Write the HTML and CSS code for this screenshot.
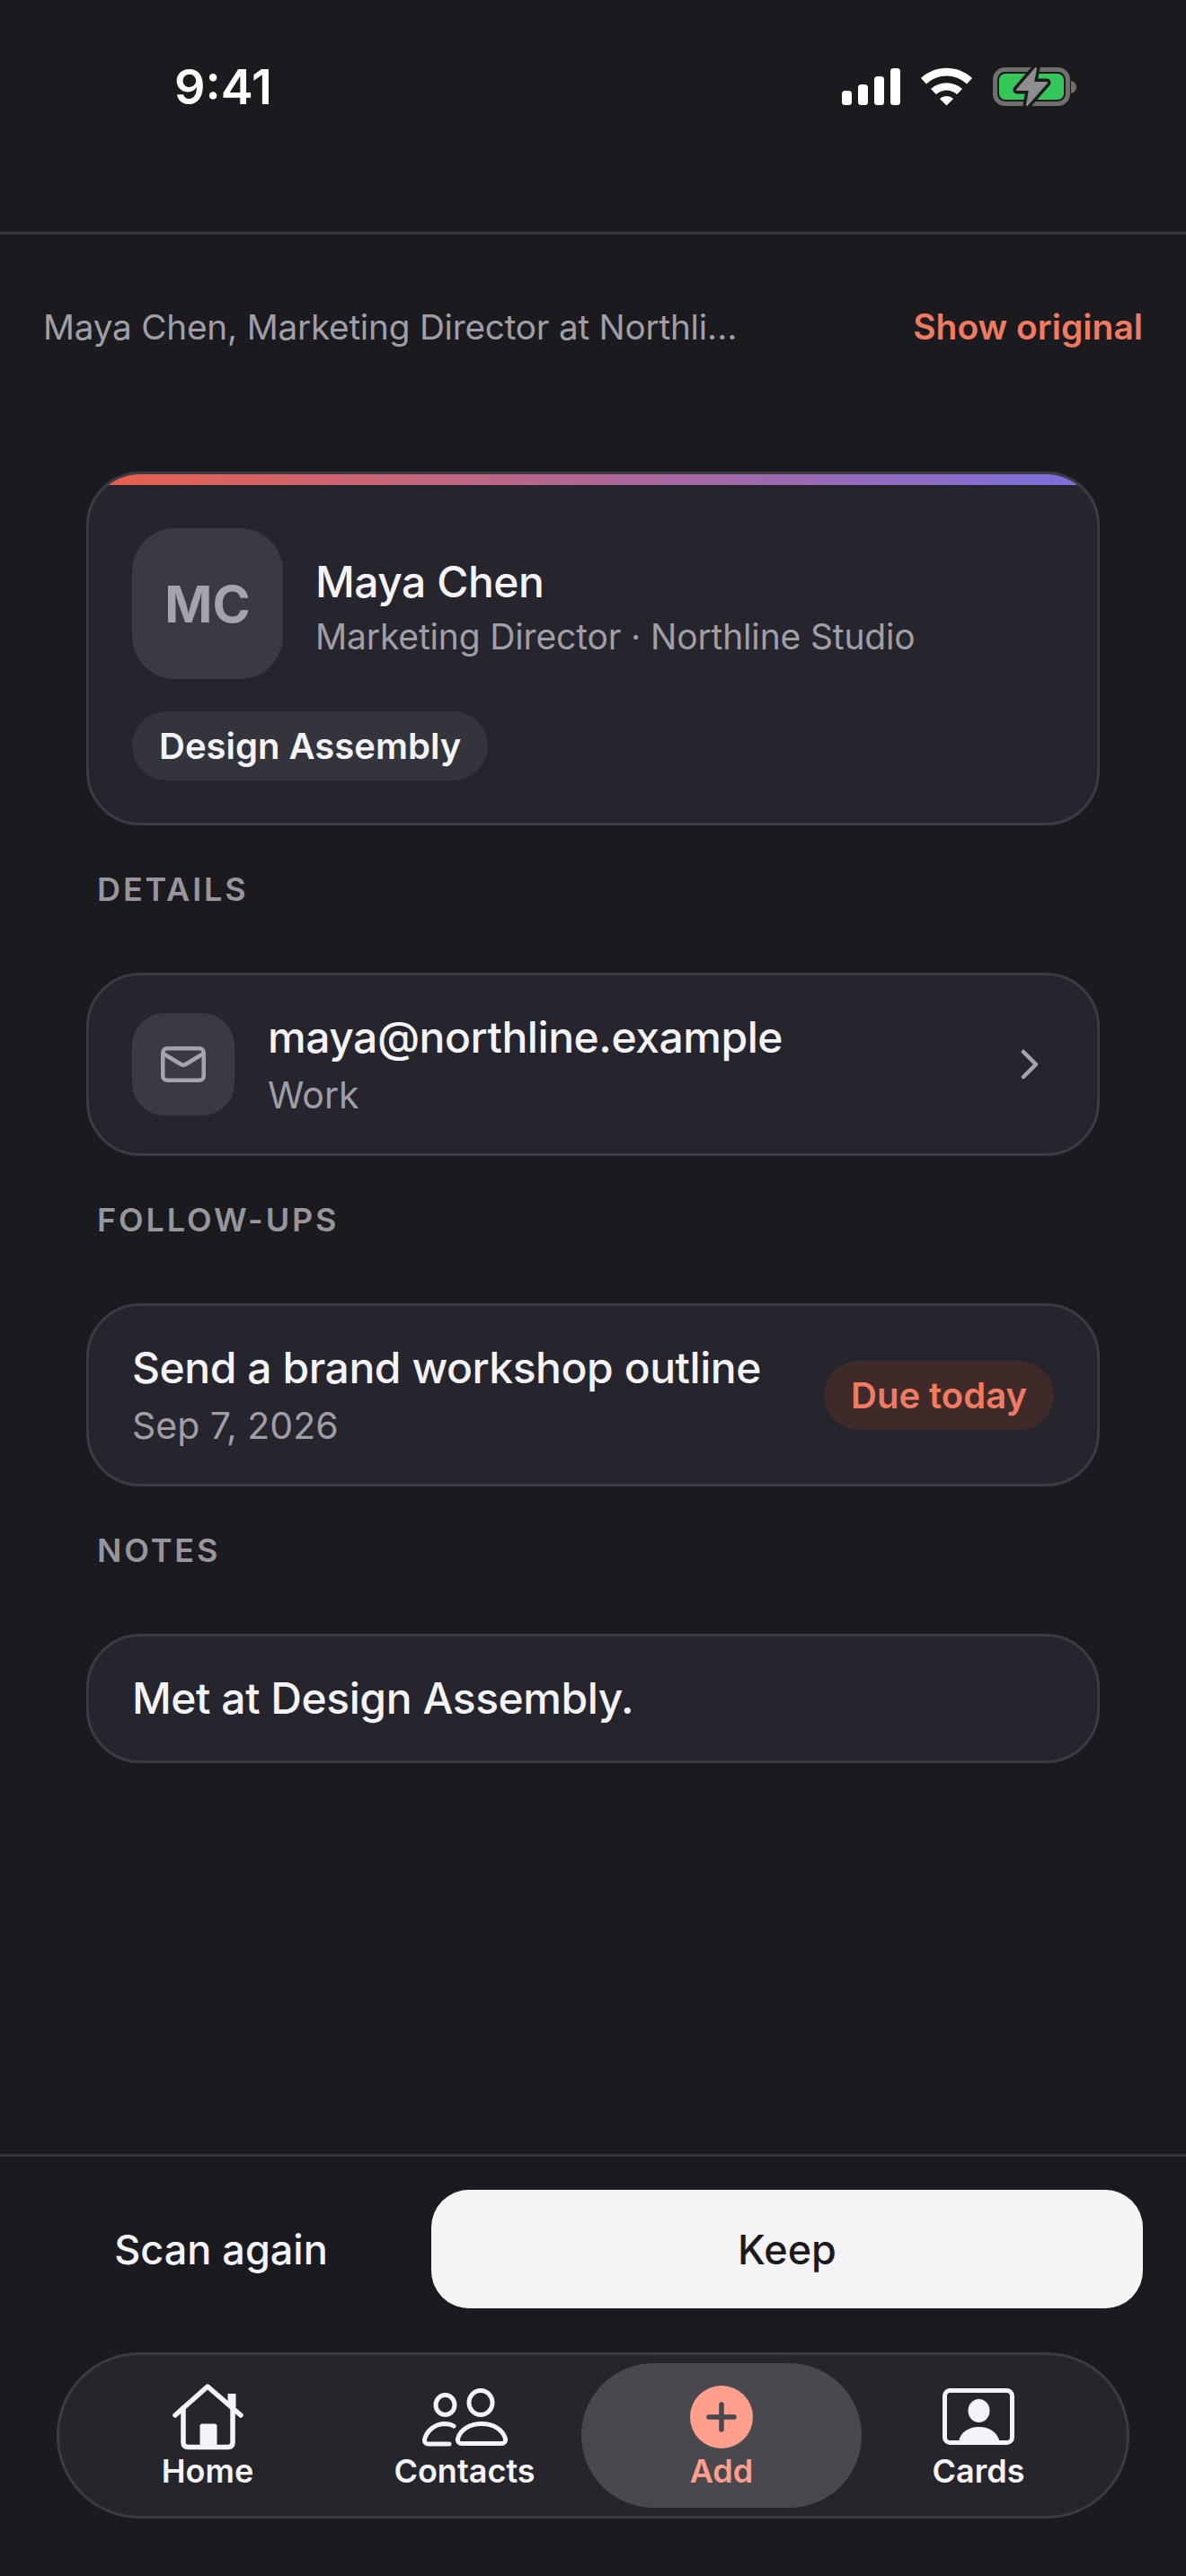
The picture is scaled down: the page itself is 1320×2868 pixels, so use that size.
FILE: index.html
```html
<!DOCTYPE html>
<html lang="en">
<head>
<meta charset="utf-8">
<title>Maya Chen</title>
<link rel="stylesheet" href="styles.css">
</head>
<body>
<div class="screen">
  <header class="status">
    <span class="time">9:41</span>
    <svg class="status-icons" width="270" height="52" viewBox="930 70 270 52">
      <rect x="937" y="101" width="11" height="16" rx="3.500" fill="#fff"/>
      <rect x="955" y="94" width="11" height="23" rx="3.500" fill="#fff"/>
      <rect x="973" y="85" width="11" height="32" rx="3.500" fill="#fff"/>
      <rect x="991" y="76" width="11" height="41" rx="3.500" fill="#fff"/>
      <path d="M1025 87 C1041 72 1066 72 1082 87 L1076 93.500 C1063 81.500 1044 81.500 1031 93.500 Z" fill="#fff"/>
      <path d="M1036 99 C1046 90 1061 90 1071 99 L1065 105 C1058 99 1049 99 1042 105 Z" fill="#fff"/>
      <path d="M1046 110 C1050 106 1057 106 1061 110 L1053.500 117.500 Z" fill="#fff"/>
      <rect x="1107.500" y="77.500" width="81" height="38" rx="11" fill="none" stroke="#6f6f72" stroke-width="5"/>
      <path d="M1192 90 C1196 91 1198 94 1198 97 C1198 100 1196 103 1192 104 Z" fill="#6f6f72"/>
      <rect x="1112" y="82" width="72" height="29" rx="7" fill="#34c759"/>
      <path d="M1153 76 L1132 100 H1146 L1143 117 L1165 92 H1150 Z" fill="#8e8e90" stroke="#1b1b1f" stroke-width="9" stroke-linejoin="round"/>
      <path d="M1153 76 L1132 100 H1146 L1143 117 L1165 92 H1150 Z" fill="#8e8e90" stroke="#8e8e90" stroke-width="2" stroke-linejoin="round"/>
    </svg>
  </header>

  <div class="summary">
    <span class="summary-text">Maya Chen, Marketing Director at Northli…</span>
    <span class="summary-link">Show original</span>
  </div>

  <main class="content">
    <section class="card hero">
      <div class="hero-bar"></div>
      <div class="hero-body">
        <div class="hero-top">
          <div class="avatar">MC</div>
          <div class="hero-text">
            <div class="name">Maya Chen</div>
            <div class="role">Marketing Director · Northline Studio</div>
          </div>
        </div>
        <span class="chip">Design Assembly</span>
      </div>
    </section>

    <h2 class="label">DETAILS</h2>
    <section class="card row">
      <div class="mail-box">
        <svg width="60" height="60" viewBox="0 0 60 60" fill="none" stroke="#a5a4ad" stroke-width="4.500" stroke-linecap="round" stroke-linejoin="round">
          <rect x="7.250" y="12.250" width="45.500" height="35.500" rx="5"/>
          <path d="M7.500 18 L27.500 30 Q30 31.500 32.500 30 L52.500 18"/>
        </svg>
      </div>
      <div class="stack grow">
        <div class="primary">maya@northline.example</div>
        <div class="muted">Work</div>
      </div>
      <svg class="chevron" width="24" height="40" viewBox="0 0 24 40" fill="none" stroke="#a5a4ad" stroke-width="4.500" stroke-linecap="round" stroke-linejoin="round">
        <path d="M3 6 L17 20 L3 34"/>
      </svg>
    </section>

    <h2 class="label">FOLLOW-UPS</h2>
    <section class="card row">
      <div class="stack grow">
        <div class="primary">Send a brand workshop outline</div>
        <div class="muted">Sep 7, 2026</div>
      </div>
      <span class="due">Due today</span>
    </section>

    <h2 class="label">NOTES</h2>
    <section class="card note">
      <div class="primary">Met at Design Assembly.</div>
    </section>
  </main>

  <footer class="footer">
    <div class="actions">
      <button class="btn-ghost">Scan again</button>
      <button class="btn-solid">Keep</button>
    </div>
    <nav class="tabs">
      <div class="tab">
        <svg class="icon" width="84" height="84" viewBox="0 0 84 84" fill="none" stroke="#f4f4f8" stroke-width="5.500" stroke-linecap="round" stroke-linejoin="round">
          <path d="M6 40 L42 8 L79 40"/>
          <path d="M15 32 V70 Q15 75.500 20.500 75.500 H64.500 Q70 75.500 70 70 V32"/>
          <path d="M69 16 V31" stroke-width="9" stroke-linecap="butt"/>
          <path d="M36 75 V52 H50 V75 Z" fill="#f4f4f8" stroke-width="5"/>
        </svg>
        <span class="tab-label">Home</span>
      </div>
      <div class="tab">
        <svg class="icon" width="100" height="84" viewBox="0 0 100 84" fill="none" stroke="#f4f4f8" stroke-width="5" stroke-linecap="round" stroke-linejoin="round">
          <ellipse cx="28.500" cy="28.500" rx="10.500" ry="11"/>
          <ellipse cx="68" cy="26" rx="13" ry="13.500"/>
          <path d="M47 71.500 H91 C94 71.500 96 69.500 95.500 66.500 C93 56 82 49.500 69 49.500 C56 49.500 45 56 42.500 66.500 C42 69.500 44 71.500 47 71.500 Z"/>
          <path d="M33 72 H10 C7 72 5 70 5.500 67 C8 57 17 50 27 49.500 C31 49.500 35 50 38 52"/>
        </svg>
        <span class="tab-label">Contacts</span>
      </div>
      <div class="tab active">
        <svg class="icon" width="84" height="84" viewBox="0 0 84 84" fill="none">
          <circle cx="42" cy="42" r="35" fill="#ff9f8c"/>
          <path d="M28 42 H56 M42 28 V56" stroke="#48484e" stroke-width="5.500" stroke-linecap="round"/>
        </svg>
        <span class="tab-label">Add</span>
      </div>
      <div class="tab">
        <svg class="icon" width="84" height="84" viewBox="0 0 84 84" fill="none">
          <rect x="4.500" y="12.500" width="75" height="58" rx="6" stroke="#f4f4f8" stroke-width="5"/>
          <ellipse cx="42.500" cy="35" rx="12" ry="13" fill="#f4f4f8"/>
          <path d="M20 69 C22 59 31 53 42.500 53 C54 53 63 59 65.500 69 Z" fill="#f4f4f8"/>
        </svg>
        <span class="tab-label">Cards</span>
      </div>
    </nav>
  </footer>
</div>
</body>
</html>
```
FILE: styles.css
```css
* { box-sizing: border-box; }
html, body { margin: 0; padding: 0; background: #1b1b1f; }
body { font-family: Inter, "Noto Sans", sans-serif; color: #f4f4f8; }
.screen { width: 1320px; height: 2868px; display: flex; flex-direction: column; overflow: hidden; }

.status { height: 261px; flex: none; padding: 67px 120px 0 194px; display: flex; justify-content: space-between; align-items: flex-start; border-bottom: 3px solid #36363e; }
.time { font-size: 54px; line-height: 60px; font-weight: 600; color: #fff; }
.status-icons { display: block; margin-top: 3px; }

.summary { flex: none; display: flex; justify-content: space-between; align-items: center; padding: 79px 48px 0; line-height: 48px; font-size: 38.700px; }
.summary-text { color: #a09fa8; white-space: nowrap; letter-spacing: -0.2px; }
.summary-link { color: #f07a62; font-weight: 600; font-size: 39px; }

.content { flex: none; padding: 137px 96px 0; }
.card { background: #26252e; border: 3px solid #3c3b45; border-radius: 60px; overflow: hidden; }
.hero-bar { height: 12px; background: linear-gradient(90deg, #e8604c, #7a6fe0); }
.hero-body { padding: 48px 48px 47px; }
.hero-top { display: flex; align-items: center; gap: 36px; margin-bottom: 36px; }
.avatar { width: 168px; height: 168px; border-radius: 48px; background: #3b3a44; color: #a5a4ad; font-size: 57px; font-weight: 700; display: flex; align-items: center; justify-content: center; }
.hero-text { display: flex; flex-direction: column; gap: 7px; padding-top: 11px; }
.stack { display: flex; flex-direction: column; gap: 14px; padding-top: 2px; height: 114px; }
.grow { flex: 1; min-width: 0; }
.name { font-size: 48px; line-height: 56px; font-weight: 500; letter-spacing: -0.5px; }
.role { font-size: 39px; line-height: 52px; color: #a09fa8; letter-spacing: -0.15px; }
.muted { font-size: 41px; line-height: 50px; color: #a09fa8; }
.primary { font-size: 48px; line-height: 50px; font-weight: 500; letter-spacing: -0.45px; }
.chip { display: inline-block; height: 77px; line-height: 77px; padding: 0 30px; border-radius: 39px; background: #34343d; font-size: 40px; font-weight: 600; }

.label { margin: 49px 0 71px 12px; font-size: 36px; line-height: 44px; font-weight: 600; letter-spacing: 0.08em; color: #96969c; }
.row { display: flex; align-items: center; padding: 42px 48px; height: 204px; }
.mail-box { width: 114px; height: 114px; flex: none; border-radius: 36px; background: #3b3a44; display: flex; align-items: center; justify-content: center; margin-right: 37px; }
.chevron { flex: none; margin-right: 13px; }
.due { flex: none; height: 77px; line-height: 77px; padding: 0 30px; border-radius: 39px; background: #3f2a29; color: #f07a62; font-size: 40px; font-weight: 600; }
.note { padding: 40px 48px; }
.note .primary { line-height: 58px; }

.footer { flex: none; margin-top: auto; border-top: 3px solid #36363e; padding: 37px 0 64px; }
.actions { display: flex; gap: 36px; padding: 0 48px; }
.btn-ghost, .btn-solid { font-family: inherit; font-size: 45px; font-weight: 500; border: 0; height: 132px; }
.btn-ghost { width: 396px; background: none; color: #f4f4f8; }
.btn-solid { flex: 1; border-radius: 42px; background: #f4f4f6; color: #1b1b1f; }
.tabs { margin: 49px 63px 0; height: 185px; border: 3px solid #3c3b45; border-radius: 92px; background: #25252b; padding: 9px 22px; display: grid; grid-template-columns: repeat(4, 1fr); }
.tab { display: flex; flex-direction: column; align-items: center; padding-top: 18px; }
.tab.active { margin: 0 -13px; border-radius: 81px; background: #48484e; color: #ff9f8c; }
.icon { display: block; flex: none; }
.tab-label { font-size: 36px; line-height: 36px; font-weight: 600; }
```
